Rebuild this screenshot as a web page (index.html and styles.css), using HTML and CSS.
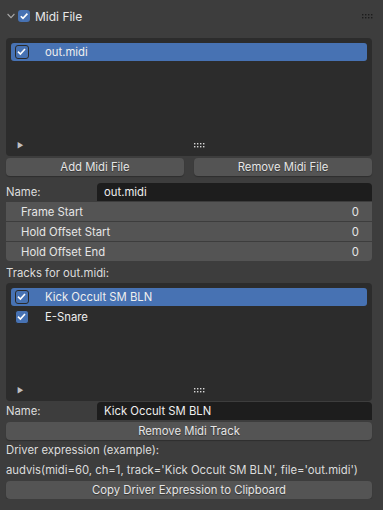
FILE: index.html
```html
<!DOCTYPE html>
<html lang="en">
<head>
  <meta charset="UTF-8">
  <meta name="viewport" content="width=device-width, initial-scale=1.0">
  <title>Midi File</title>
  <link rel="stylesheet" href="styles.css">
</head>
<body>
  <div class="panel">
    <!-- Panel header -->
    <div class="panel-header">
      <svg class="chevron" width="8" height="6" viewBox="0 0 8 6"><path d="M0.6 1 L4 4.6 L7.4 1" fill="none" stroke="#a8a8a8" stroke-width="1.1"/></svg>
      <span class="check on">
        <svg width="12" height="12" viewBox="0 0 12 12"><path d="M2.8 6.2 L5 8.4 L9.4 3.6" fill="none" stroke="#fff" stroke-width="1.6"/></svg>
      </span>
      <span class="panel-title">Midi File</span>
      <svg class="grip dark" width="11" height="5" viewBox="0 0 11 5">
        <rect x="0" y="0" width="1.4" height="1.4"/><rect x="3" y="0" width="1.4" height="1.4"/><rect x="6" y="0" width="1.4" height="1.4"/><rect x="9" y="0" width="1.4" height="1.4"/>
        <rect x="0" y="3" width="1.4" height="1.4"/><rect x="3" y="3" width="1.4" height="1.4"/><rect x="6" y="3" width="1.4" height="1.4"/><rect x="9" y="3" width="1.4" height="1.4"/>
      </svg>
    </div>

    <!-- Midi file list -->
    <div class="list">
      <div class="list-items">
        <div class="list-row selected">
          <span class="check on">
            <svg width="13" height="13" viewBox="0 0 13 13"><path d="M3 6.6 L5.4 9 L10 4" fill="none" stroke="#fff" stroke-width="1.6"/></svg>
          </span>
          <span class="row-text">out.midi</span>
        </div>
      </div>
      <div class="list-footer">
        <span class="tri">&#9658;</span>
        <svg class="grip light" width="11" height="5" viewBox="0 0 11 5">
          <rect x="0" y="0" width="1.4" height="1.4"/><rect x="3" y="0" width="1.4" height="1.4"/><rect x="6" y="0" width="1.4" height="1.4"/><rect x="9" y="0" width="1.4" height="1.4"/>
          <rect x="0" y="3" width="1.4" height="1.4"/><rect x="3" y="3" width="1.4" height="1.4"/><rect x="6" y="3" width="1.4" height="1.4"/><rect x="9" y="3" width="1.4" height="1.4"/>
        </svg>
      </div>
    </div>

    <div class="btn-row">
      <button class="btn">Add Midi File</button>
      <button class="btn">Remove Midi File</button>
    </div>

    <div class="prop-row first">
      <span class="prop-label">Name:</span>
      <div class="field">out.midi</div>
    </div>

    <div class="num-group">
      <div class="num-row"><span>Frame Start</span><span>0</span></div>
      <div class="num-row"><span>Hold Offset Start</span><span>0</span></div>
      <div class="num-row"><span>Hold Offset End</span><span>0</span></div>
    </div>

    <div class="text-line tracks">Tracks for out.midi:</div>

    <!-- Track list -->
    <div class="list">
      <div class="list-items">
        <div class="list-row selected">
          <span class="check on">
            <svg width="13" height="13" viewBox="0 0 13 13"><path d="M3 6.6 L5.4 9 L10 4" fill="none" stroke="#fff" stroke-width="1.6"/></svg>
          </span>
          <span class="row-text">Kick Occult SM BLN</span>
        </div>
        <div class="list-row">
          <span class="check on">
            <svg width="13" height="13" viewBox="0 0 13 13"><path d="M3 6.6 L5.4 9 L10 4" fill="none" stroke="#fff" stroke-width="1.6"/></svg>
          </span>
          <span class="row-text">E-Snare</span>
        </div>
      </div>
      <div class="list-footer">
        <span class="tri">&#9658;</span>
        <svg class="grip light" width="11" height="5" viewBox="0 0 11 5">
          <rect x="0" y="0" width="1.4" height="1.4"/><rect x="3" y="0" width="1.4" height="1.4"/><rect x="6" y="0" width="1.4" height="1.4"/><rect x="9" y="0" width="1.4" height="1.4"/>
          <rect x="0" y="3" width="1.4" height="1.4"/><rect x="3" y="3" width="1.4" height="1.4"/><rect x="6" y="3" width="1.4" height="1.4"/><rect x="9" y="3" width="1.4" height="1.4"/>
        </svg>
      </div>
    </div>

    <div class="prop-row">
      <span class="prop-label">Name:</span>
      <div class="field">Kick Occult SM BLN</div>
    </div>

    <button class="btn wide">Remove Midi Track</button>

    <div class="text-line">Driver expression (example):</div>
    <div class="text-line">audvis(midi=60, ch=1, track='Kick Occult SM BLN', file='out.midi')</div>

    <button class="btn wide copy">Copy Driver Expression to Clipboard</button>
  </div>
</body>
</html>
```

FILE: styles.css
```css
body {
  margin: 0;
  background-color: #3d3d3d;
  font-family: Inter, "Noto Sans", sans-serif;
  font-size: 11.3px;
  color: #e6e6e6;
}

.panel {
  display: flex;
  flex-direction: column;
  padding: 0 11px 0 6px;
  width: 366px;
}

/* Header */
.panel-header {
  display: flex;
  align-items: center;
  height: 32px;
}

.chevron {
  margin-left: 1px;
  margin-right: 3px;
}

.panel-title {
  margin-left: 5px;
  font-size: 12px;
  color: #e8e8e8;
}

.grip {
  margin-left: auto;
}

.grip.dark rect {
  fill: #1c1c1c;
}

.grip.light rect {
  fill: #d8d8d8;
}

.panel-header .grip {
  margin-right: -1px;
}

/* Checkboxes */
.check {
  display: inline-flex;
  box-sizing: border-box;
  width: 12px;
  height: 12px;
  border-radius: 3px;
  background-color: #4772b3;
}

.list-row .check {
  width: 14px;
  height: 14px;
  border: 1px solid #2a2a2a;
  border-radius: 3px;
}

.list-row .check svg {
  margin: -1px 0 0 -1px;
}

/* Lists */
.list {
  display: flex;
  flex-direction: column;
  height: 118px;
  margin-top: 6px;
  background-color: #2c2c2c;
  border-radius: 4px;
  box-sizing: border-box;
  padding: 5px 5px 3px;
}

.list-items {
  flex: 1;
}

.list-row {
  display: flex;
  align-items: center;
  height: 18px;
  margin-bottom: 2px;
  padding-left: 4px;
  border-radius: 3px;
}

.list-row.selected {
  background-color: #4772b3;
}

.row-text {
  margin-left: 16px;
  color: #eeeeee;
}

.list-footer {
  display: flex;
  align-items: center;
  height: 16px;
}

.tri {
  font-size: 7px;
  color: #c0c0c0;
  margin-left: 6px;
  width: 11px;
}

.list-footer .grip {
  margin-left: 166px;
}

/* Buttons */
.btn {
  font-family: inherit;
  font-size: 11.3px;
  color: #e6e6e6;
  background-color: #545454;
  border: none;
  border-radius: 4px;
  height: 18px;
  padding: 0;
  box-shadow: 0 1px 1px rgba(0, 0, 0, 0.25);
  text-shadow: 0 1px 1px rgba(0, 0, 0, 0.4);
}

.btn-row {
  display: flex;
  gap: 10px;
  margin-top: 2px;
}

.btn-row .btn {
  flex: 1;
}

.btn.wide {
  width: 100%;
  margin-top: 2px;
}

.btn.copy {
  margin-top: 1px;
}

/* Properties */
.prop-row {
  display: flex;
  align-items: center;
  height: 18px;
  margin-top: 1px;
}

.prop-row.first {
  margin-top: 7px;
}

.prop-label {
  width: 91px;
  color: #dcdcdc;
}

.field {
  flex: 1;
  height: 18px;
  line-height: 18px;
  background-color: #1d1d1d;
  border-radius: 4px 4px 0 0;
  padding-left: 7px;
  color: #eeeeee;
}

.num-group {
  display: flex;
  flex-direction: column;
  gap: 1px;
  margin-top: 1px;
}

.num-row {
  display: flex;
  justify-content: space-between;
  align-items: center;
  height: 19px;
  padding: 0 13px 0 15px;
  background-color: #545454;
}

.num-row:last-child {
  border-radius: 0 0 4px 4px;
}

.text-line {
  height: 20px;
  line-height: 20px;
  color: #dcdcdc;
  white-space: nowrap;
}

.text-line.tracks {
  margin-top: 2px;
}

.text-line.tracks + .list {
  margin-top: 0;
}
```
